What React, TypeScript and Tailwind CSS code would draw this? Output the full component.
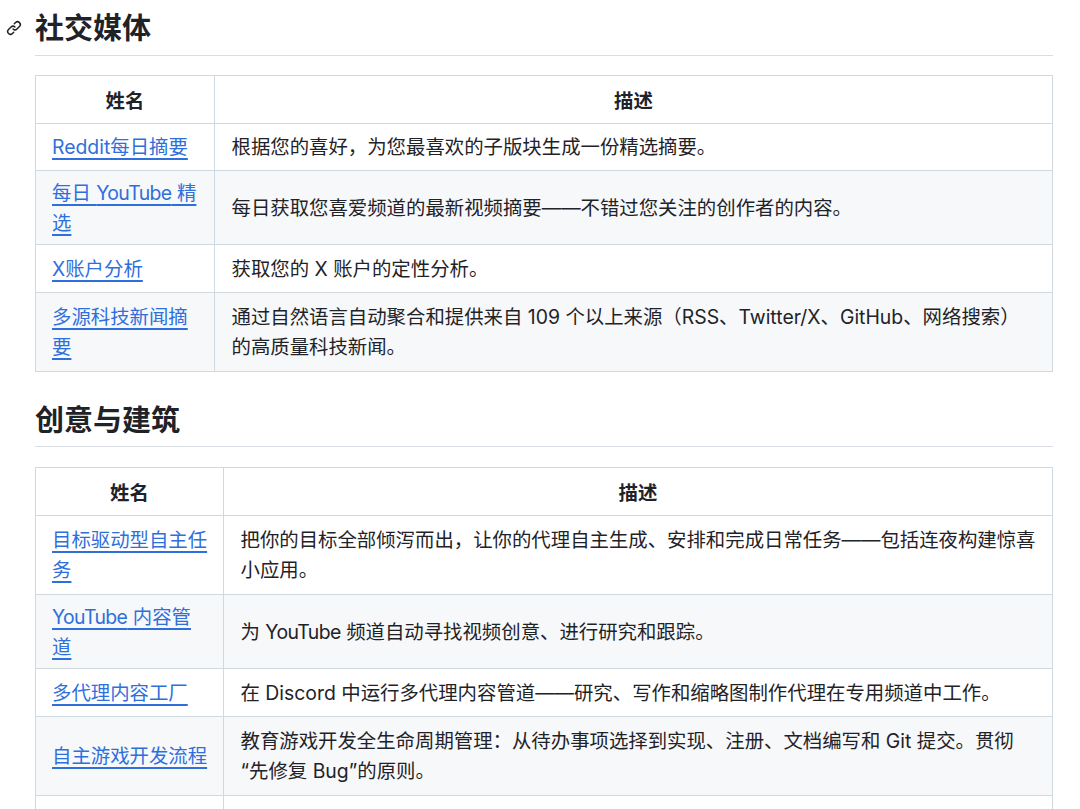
import type { ReactNode } from "react";

const sans = "font-['Inter','Noto_Sans_CJK_SC',sans-serif]";

interface Row {
    name: ReactNode,
    desc: ReactNode,
    pad?: string,
}

// row heights in the shot are uneven: 47, 48, 74 and 79
const mid = "py-[8.5px]";
const tight = "py-[6.5px]";
const loose = "py-[9px]";

const YouTube = () => <span className="tracking-[-0.6px]">YouTube</span>;

const social: Row[] = [
    { name: "Reddit每日摘要", desc: "根据您的喜好，为您最喜欢的子版块生成一份精选摘要。" },
    { name: <>每日 <YouTube /> 精<br />选</>, desc: "每日获取您喜爱频道的最新视频摘要——不错过您关注的创作者的内容。", pad: tight },
    { name: "X账户分析", desc: "获取您的 X 账户的定性分析。", pad: mid },
    { name: "多源科技新闻摘要", desc: "通过自然语言自动聚合和提供来自 109 个以上来源（RSS、Twitter/X、GitHub、网络搜索）的高质量科技新闻。", pad: loose },
];

const creative: Row[] = [
    { name: "目标驱动型自主任务", desc: "把你的目标全部倾泻而出，让你的代理自主生成、安排和完成日常任务——包括连夜构建惊喜小应用。", pad: loose },
    { name: <><YouTube /> 内容管<br />道</>, desc: <>为 <YouTube /> 频道自动寻找视频创意、进行研究和跟踪。</>, pad: tight },
    { name: "多代理内容工厂", desc: "在 Discord 中运行多代理内容管道——研究、写作和缩略图制作代理在专用频道中工作。", pad: mid },
    { name: "自主游戏开发流程", desc: "教育游戏开发全生命周期管理：从待办事项选择到实现、注册、文档编写和 Git 提交。贯彻\u200B“先修复 Bug”的原则。", pad: loose },
    { name: "", desc: "" },
];

const Table = ({ rows, nameWidth }: { rows: Row[], nameWidth: string }) => {
    return (
        <table className="w-full border-collapse table-fixed text-[19.4px] leading-[30px] text-[#1f2328]">
            <colgroup>
                <col className={nameWidth} />
                <col />
            </colgroup>
            <thead>
                <tr className="bg-white">
                    <th className="border border-[#d1d9e0] px-4 pt-[10px] pb-[7px] font-semibold">姓名</th>
                    <th className="border border-[#d1d9e0] px-4 pt-[10px] pb-[7px] font-semibold">描述</th>
                </tr>
            </thead>
            <tbody>
                {rows.map((row, i) => (
                    <tr key={i} className={i % 2 === 0 ? "bg-white" : "bg-[#f6f8fa]"}>
                        <td className={`border border-[#d1d9e0] pl-4 pr-[12px] ${row.pad ?? "py-[8px]"}`}>
                            <a href="#" className="text-[#2f6fdc] underline decoration-[1.5px] underline-offset-[4px] [text-decoration-skip-ink:none]">{row.name}</a>
                            {!row.name && <span>&nbsp;</span>}
                        </td>
                        <td className={`border border-[#d1d9e0] pl-[16.5px] pr-4 ${row.pad ?? "py-[8px]"}`}>{row.desc}</td>
                    </tr>
                ))}
            </tbody>
        </table>
    );
};

const App = () => {
    return (
        <div className={`bg-white h-[809px] overflow-hidden pl-[35px] pr-[27px] ${sans}`}>
            <h2 className="relative flex items-center h-[56px] border-b border-[#d8dee4] text-[29px] font-semibold text-[#1f2328] pt-[2px]">
                <svg className="absolute left-[-29px] top-[20px] size-[16px] text-[#1f2328]" viewBox="0 0 16 16" fill="currentColor">
                    <path d="m7.775 3.275 1.25-1.25a3.5 3.5 0 1 1 4.95 4.95l-2.5 2.5a3.5 3.5 0 0 1-4.95 0 .751.751 0 0 1 .018-1.042.751.751 0 0 1 1.042-.018 1.998 1.998 0 0 0 2.83 0l2.5-2.5a2.002 2.002 0 0 0-2.83-2.83l-1.25 1.25a.751.751 0 0 1-1.042-.018.751.751 0 0 1-.018-1.042Zm-4.69 9.64a1.998 1.998 0 0 0 2.83 0l1.25-1.25a.751.751 0 0 1 1.042.018.751.751 0 0 1 .018 1.042l-1.25 1.25a3.5 3.5 0 1 1-4.95-4.95l2.5-2.5a3.5 3.5 0 0 1 4.95 0 .751.751 0 0 1-.018 1.042.751.751 0 0 1-1.042.018 1.998 1.998 0 0 0-2.83 0l-2.5 2.5a1.998 1.998 0 0 0 0 2.83Z" />
                </svg>
                社交媒体
            </h2>
            <div className="mt-[19px]">
                <Table rows={social} nameWidth="w-[179px]" />
            </div>
            <h2 className="flex items-center h-[75px] pt-[24px] border-b border-[#d8dee4] text-[29px] font-semibold text-[#1f2328]">创意与建筑</h2>
            <div className="mt-[20px]">
                <Table rows={creative} nameWidth="w-[188px]" />
            </div>
        </div>
    );
};

export default App;
